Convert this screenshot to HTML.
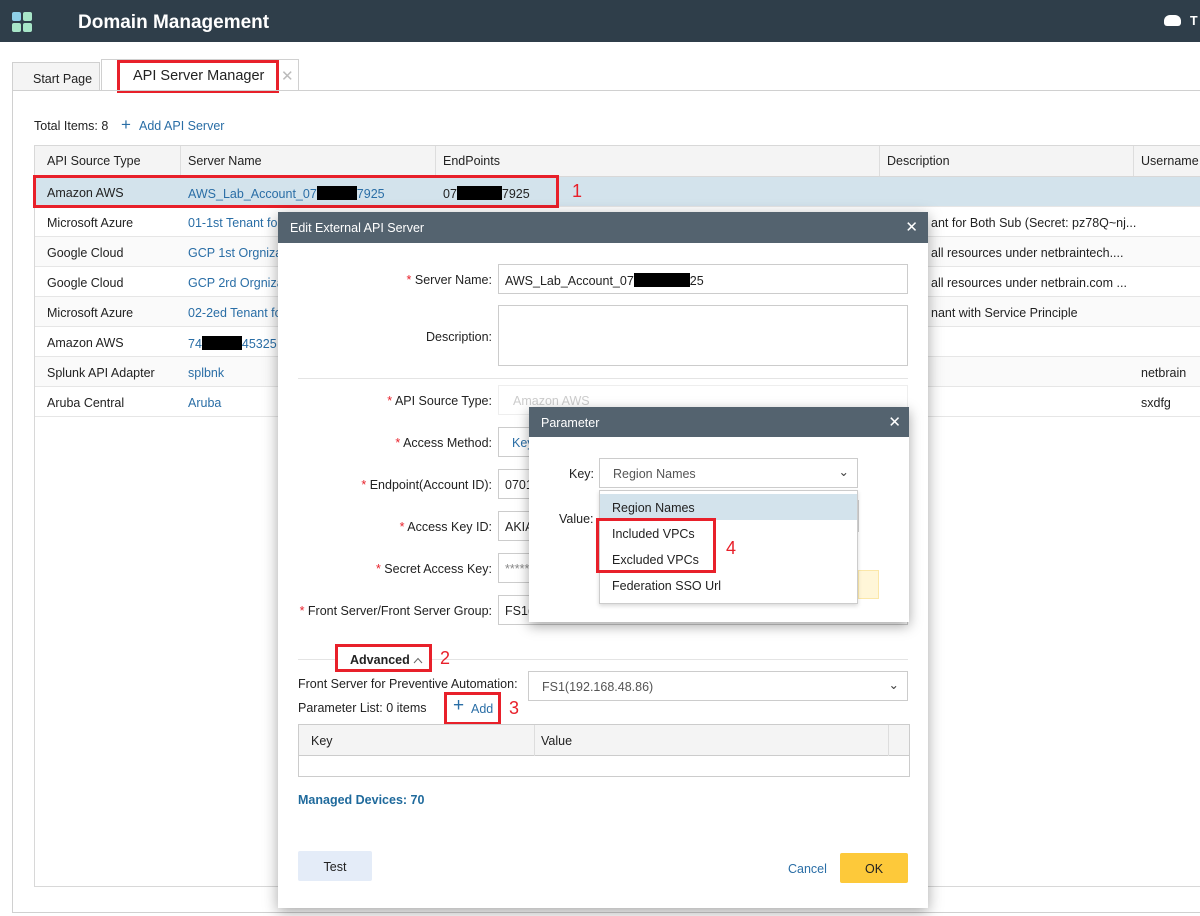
<!DOCTYPE html>
<html><head><meta charset="utf-8"><style>
*{box-sizing:border-box;margin:0;padding:0}
body{width:1200px;height:916px;position:relative;overflow:hidden;background:#fff;font-family:"Liberation Sans",sans-serif;font-size:12.5px;color:#222}
.a{position:absolute;white-space:nowrap}
.hdr{left:0;top:0;width:1200px;height:42px;background:#2f3e4a}
.red{border:3px solid #e8202a}
.rn{color:#e8202a;font-size:18px}
.lnk{color:#2a6ea6}
.row{position:absolute;left:35px;width:1165px;height:30px;border-bottom:1px solid #e6e6e6}
.row span{position:absolute;top:9px;white-space:nowrap}
.lbl{position:absolute;right:0;text-align:right;width:200px}
.lbl b{color:#e8202a;font-weight:normal}
.inp{position:absolute;border:1px solid #ccc;background:#fff;padding:8px 6px;white-space:nowrap}
</style></head><body>
<div class="a hdr"></div>
<div class="a" style="left:12px;top:12px;width:20px;height:20px">
<div class="a" style="left:0;top:0;width:9px;height:9px;background:#8fd0e8;border-radius:2px"></div>
<div class="a" style="left:11px;top:0;width:9px;height:9px;background:#a8e6c8;border-radius:2px"></div>
<div class="a" style="left:0;top:11px;width:9px;height:9px;background:#a8e6c8;border-radius:2px"></div>
<div class="a" style="left:11px;top:11px;width:9px;height:9px;background:#a8e6c8;border-radius:2px"></div></div>
<div class="a" style="left:78px;top:12px;color:#fff;font-size:19px;font-weight:bold">Domain Management</div>
<div class="a" style="left:1164px;top:15px;width:17px;height:11px;background:#fff;border-radius:6px 6px 3px 3px"></div>
<div class="a" style="left:1190px;top:14px;color:#fff;font-weight:bold">T</div>
<!-- tabs -->
<div class="a" style="left:12px;top:62px;width:88px;height:29px;background:#f4f4f4;border:1px solid #d0d0d0;border-bottom:none;padding:9px 0 0 20px">Start Page</div>
<div class="a" style="left:101px;top:59px;width:198px;height:32px;background:#fff;border:1px solid #d0d0d0;border-bottom:none"></div>
<div class="a red" style="left:117px;top:60px;width:162px;height:33px;padding:5px 0 0 13px;font-size:14.5px">API Server Manager</div>
<div class="a" style="left:281px;top:67px;color:#bbb;font-size:15px">✕</div>
<div class="a" style="left:12px;top:90px;width:1200px;height:823px;border:1px solid #d0d0d0;border-right:none"></div>
<div class="a" style="left:34px;top:119px">Total Items: 8</div>
<div class="a lnk" style="left:121px;top:115px;font-size:17px">+</div>
<div class="a lnk" style="left:139px;top:119px">Add API Server</div>
<!-- table -->
<div class="a" style="left:34px;top:145px;width:1170px;height:742px;border:1px solid #d8d8d8"></div>
<div class="a" style="left:35px;top:146px;width:1165px;height:31px;background:#f4f4f4;border-bottom:1px solid #d8d8d8"></div>
<div class="a" style="left:180px;top:146px;width:1px;height:30px;background:#ddd"></div>
<div class="a" style="left:435px;top:146px;width:1px;height:30px;background:#ddd"></div>
<div class="a" style="left:879px;top:146px;width:1px;height:30px;background:#ddd"></div>
<div class="a" style="left:1133px;top:146px;width:1px;height:30px;background:#ddd"></div>
<div class="a" style="left:47px;top:154px">API Source Type</div>
<div class="a" style="left:188px;top:154px">Server Name</div>
<div class="a" style="left:443px;top:154px">EndPoints</div>
<div class="a" style="left:887px;top:154px">Description</div>
<div class="a" style="left:1141px;top:154px">Username</div>
<div class="row" style="top:177px;background:#d3e3ec"><span style="left:12px">Amazon AWS</span><span class="lnk" style="left:153px">AWS_Lab_Account_07<i style="display:inline-block;width:40px;height:14px;background:#000;vertical-align:-2px"></i>7925</span><span style="left:408px">07<i style="display:inline-block;width:45px;height:14px;background:#000;vertical-align:-2px"></i>7925</span></div>
<div class="row" style="top:207px"><span style="left:12px">Microsoft Azure</span><span class="lnk" style="left:153px">01-1st Tenant fo</span><span style="left:896px">ant for Both Sub (Secret: pz78Q~nj...</span></div>
<div class="row" style="top:237px;background:#fafafa"><span style="left:12px">Google Cloud</span><span class="lnk" style="left:153px">GCP 1st Orgniza</span><span style="left:896px">all resources under netbraintech....</span></div>
<div class="row" style="top:267px"><span style="left:12px">Google Cloud</span><span class="lnk" style="left:153px">GCP 2rd Orgniza</span><span style="left:896px">all resources under netbrain.com ...</span></div>
<div class="row" style="top:297px;background:#fafafa"><span style="left:12px">Microsoft Azure</span><span class="lnk" style="left:153px">02-2ed Tenant fo</span><span style="left:896px">nant with Service Principle</span></div>
<div class="row" style="top:327px"><span style="left:12px">Amazon AWS</span><span class="lnk" style="left:153px">74<i style="display:inline-block;width:40px;height:14px;background:#000;vertical-align:-2px"></i>45325</span></div>
<div class="row" style="top:357px;background:#fafafa"><span style="left:12px">Splunk API Adapter</span><span class="lnk" style="left:153px">splbnk</span><span style="left:1106px">netbrain</span></div>
<div class="row" style="top:387px"><span style="left:12px">Aruba Central</span><span class="lnk" style="left:153px">Aruba</span><span style="left:1106px">sxdfg</span></div>
<div class="a red" style="left:33px;top:175px;width:526px;height:33px"></div>
<div class="a rn" style="left:572px;top:181px">1</div>
<!-- modal -->
<div class="a" style="left:278px;top:212px;width:650px;height:696px;background:#fff;box-shadow:0 4px 14px rgba(0,0,0,.35)"></div>
<div class="a" style="left:278px;top:212px;width:650px;height:31px;background:#54636f;color:#fff;padding:9px 12px">Edit External API Server<span style="position:absolute;right:10px;top:6px;font-size:15px">✕</span></div>
<div class="a" style="left:292px;top:273px;width:200px;height:14px"><div class="lbl"><b>*</b> Server Name:</div></div>
<div class="inp" style="left:498px;top:264px;width:410px;height:30px">AWS_Lab_Account_07<i style="display:inline-block;width:56px;height:14px;background:#000;vertical-align:-2px"></i>25</div>
<div class="a" style="left:292px;top:330px;width:200px;height:14px"><div class="lbl">Description:</div></div>
<div class="inp" style="left:498px;top:305px;width:410px;height:61px"></div>
<div class="a" style="left:298px;top:378px;width:610px;height:1px;background:#e4e4e4"></div>
<div class="a" style="left:292px;top:394px;width:200px;height:14px"><div class="lbl"><b>*</b> API Source Type:</div></div>
<div class="inp" style="left:498px;top:385px;width:410px;height:30px;color:#ccc;border-color:#eee;padding-left:14px">Amazon AWS</div>
<div class="a" style="left:292px;top:436px;width:200px;height:14px"><div class="lbl"><b>*</b> Access Method:</div></div>
<div class="inp lnk" style="left:498px;top:427px;width:410px;height:30px;padding-left:13px">Key</div>
<div class="a" style="left:292px;top:478px;width:200px;height:14px"><div class="lbl"><b>*</b> Endpoint(Account ID):</div></div>
<div class="inp" style="left:498px;top:469px;width:410px;height:30px">0701</div>
<div class="a" style="left:292px;top:520px;width:200px;height:14px"><div class="lbl"><b>*</b> Access Key ID:</div></div>
<div class="inp" style="left:498px;top:511px;width:410px;height:30px">AKIA</div>
<div class="a" style="left:292px;top:562px;width:200px;height:14px"><div class="lbl"><b>*</b> Secret Access Key:</div></div>
<div class="inp" style="left:498px;top:553px;width:410px;height:30px;color:#888">*****</div>
<div class="a" style="left:292px;top:604px;width:200px;height:14px"><div class="lbl"><b>*</b> Front Server/Front Server Group:</div></div>
<div class="inp" style="left:498px;top:595px;width:410px;height:30px">FS1(</div>
<div class="a" style="left:298px;top:659px;width:610px;height:1px;background:#e4e4e4"></div>
<div class="a red" style="left:335px;top:644px;width:97px;height:28px;background:#fff;padding:6px 0 0 12px;font-weight:bold">Advanced <svg width="10" height="7" viewBox="0 0 10 7" style="vertical-align:0"><path d="M1 6 L5 1.5 L9 6" fill="none" stroke="#666" stroke-width="1"/></svg></div>
<div class="a rn" style="left:440px;top:648px">2</div>
<div class="a" style="left:298px;top:677px">Front Server for Preventive Automation:</div>
<div class="inp" style="left:528px;top:671px;width:380px;height:30px;color:#555;padding-left:13px">FS1(192.168.48.86)<span style="position:absolute;right:8px;top:5px;color:#444">⌄</span></div>
<div class="a" style="left:298px;top:701px">Parameter List: 0 items</div>
<div class="a red" style="left:444px;top:692px;width:57px;height:33px"></div>
<div class="a lnk" style="left:453px;top:695px;font-size:19px">+</div>
<div class="a lnk" style="left:471px;top:702px">Add</div>
<div class="a rn" style="left:509px;top:698px">3</div>
<div class="a" style="left:298px;top:724px;width:612px;height:53px;border:1px solid #ccc"></div>
<div class="a" style="left:299px;top:725px;width:610px;height:31px;background:#f4f4f4;border-bottom:1px solid #ccc"></div>
<div class="a" style="left:534px;top:725px;width:1px;height:31px;background:#ddd"></div>
<div class="a" style="left:888px;top:725px;width:1px;height:31px;background:#ddd"></div>
<div class="a" style="left:311px;top:734px">Key</div>
<div class="a" style="left:541px;top:734px">Value</div>
<div class="a" style="left:298px;top:793px;color:#1f6a9c;font-weight:bold">Managed Devices: 70</div>
<div class="a" style="left:298px;top:851px;width:74px;height:30px;background:#e4ecf8;border-radius:2px;text-align:center;padding-top:9px">Test</div>
<div class="a lnk" style="left:788px;top:862px">Cancel</div>
<div class="a" style="left:840px;top:853px;width:68px;height:30px;background:#fdc93a;border-radius:2px;text-align:center;padding-top:9px">OK</div>
<!-- parameter dialog -->
<div class="a" style="left:529px;top:407px;width:380px;height:215px;background:#fff;box-shadow:0 4px 12px rgba(0,0,0,.35)"></div>
<div class="a" style="left:529px;top:407px;width:380px;height:30px;background:#54636f;color:#fff;padding:9px 12px">Parameter<span style="position:absolute;right:8px;top:6px;font-size:15px">✕</span></div>
<div class="a" style="left:569px;top:467px">Key:</div>
<div class="inp" style="left:599px;top:458px;width:259px;height:30px;color:#555;padding-left:13px">Region Names<span style="position:absolute;right:8px;top:5px;color:#444">⌄</span></div>
<div class="a" style="left:559px;top:512px">Value:</div>
<div class="a" style="left:856px;top:500px;width:3px;height:32px;border:1px solid #ccc;border-left:none"></div>
<div class="a" style="left:858px;top:570px;width:21px;height:29px;background:#fff6d8;border:1px solid #fbe7a8"></div>
<div class="a" style="left:599px;top:490px;width:259px;height:114px;background:#fff;border:1px solid #ccc;box-shadow:0 2px 4px rgba(0,0,0,.15)"></div>
<div class="a" style="left:600px;top:494px;width:257px;height:26px;background:#d3e3ec;padding:7px 12px">Region Names</div>
<div class="a" style="left:612px;top:527px">Included VPCs</div>
<div class="a" style="left:612px;top:553px">Excluded VPCs</div>
<div class="a" style="left:612px;top:579px">Federation SSO Url</div>
<div class="a red" style="left:596px;top:518px;width:120px;height:55px"></div>
<div class="a rn" style="left:726px;top:538px">4</div>
</body></html>
